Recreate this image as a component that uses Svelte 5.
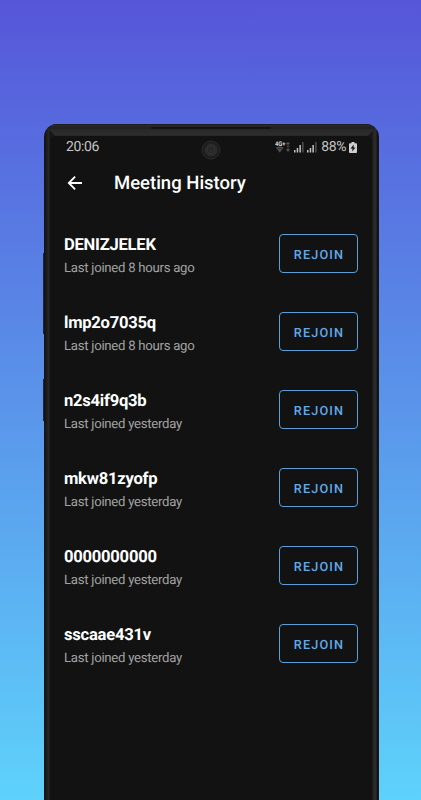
<script>
  const meetings = [
    { name: 'DENIZJELEK', joined: '8 hours ago' },
    { name: 'lmp2o7035q', joined: '8 hours ago' },
    { name: 'n2s4if9q3b', joined: 'yesterday' },
    { name: 'mkw81zyofp', joined: 'yesterday' },
    { name: '0000000000', joined: 'yesterday' },
    { name: 'sscaae431v', joined: 'yesterday' }
  ];
</script>

{#snippet signal()}
  <svg class="signal" width="10" height="12" viewBox="0 0 10 12">
    <path d="M0 9h1.5v2.5H0zM2.7 7h1.5v4.5H2.7zM5.4 4h1.5v7.5H5.4z" fill="#c4c4c4" />
    <path d="M8.1 1h1.5v10.5H8.1z" fill="#505050" />
  </svg>
{/snippet}

<div class="stage">
  <div class="phone">
    <span class="key volume"></span>
    <span class="key power"></span>
    <span class="speaker"></span>
    <div class="screen">
      <svg class="camera" width="20" height="20" viewBox="0 0 20 20">
        <circle cx="10" cy="10" r="9" fill="#1b1b1b" stroke="#2c2c2c" />
        <circle cx="10" cy="10" r="6.8" fill="#2b2b2b" stroke="#202020" />
        <circle cx="10" cy="10" r="3.6" fill="#242424" stroke="#333" />
        <circle cx="10" cy="10.5" r="1.5" fill="#303030" />
      </svg>

      <div class="status">
        <span class="clock">20:06</span>
        <div class="indicators">
          <svg class="network" width="16" height="12" viewBox="0 0 16 12">
            <text x="0" y="5" textLength="10.5" lengthAdjust="spacingAndGlyphs">4G+</text>
            <path d="M.8 6.8Q4.7 4.4 8.6 6.8L4.7 11.4z" fill="#505050" />
            <path d="M2.2 8Q4.7 6.5 7.2 8" fill="none" stroke="#222" stroke-width=".7" />
            <path d="M11.5 3L13 1.2 14.5 3zM13 2v3M11.7 5.5h2.8M13 6v3M11.5 8.5L13 10.5l1.5-2z" fill="#666" stroke="#555" stroke-width=".7" />
          </svg>
          {@render signal()}
          {@render signal()}
          <span class="percent">88%</span>
          <svg class="battery" width="8" height="11" viewBox="0 0 8 11">
            <path d="M2.5 0h3v1.2h1.6q.9 0 .9.9v8q0 .9-.9.9H.9q-.9 0-.9-.9v-8q0-.9.9-.9h1.6z" fill="#cfcfcf" />
            <path d="M4.8 2.5L1.5 6.5h2L3.1 9.4 6.5 5.4h-2z" fill="#121212" />
          </svg>
        </div>
      </div>

      <header>
        <svg class="back" width="16" height="16" viewBox="0 0 16 16">
          <path d="M15 8H1.8M8.1 1.7L1.8 8l6.3 6.3" fill="none" stroke="#fff" stroke-width="1.8" />
        </svg>
        <h1>Meeting History</h1>
      </header>

      <ul>
        {#each meetings as meeting}
          <li>
            <div class="info">
              <div class="name">{meeting.name}</div>
              <div class="joined">Last joined {meeting.joined}</div>
            </div>
            <button>REJOIN</button>
          </li>
        {/each}
      </ul>
    </div>
  </div>
</div>

<style>
  :global(body) {
    margin: 0;
  }
  .stage {
    box-sizing: border-box;
    height: 800px;
    padding: 124px 42px 0 44px;
    overflow: hidden;
    background: linear-gradient(#5656d9, #5ed2fb);
    font-family: Roboto, sans-serif;
    text-rendering: geometricPrecision;
  }
  .phone {
    position: relative;
    box-sizing: border-box;
    height: 720px;
    padding: 12px 7px 0 6px;
    border-radius: 13px 13px 0 0;
    background: linear-gradient(90deg, #111 0, #191919 2px, #272727 5px, #171717 6px, #171717 328px, #2b2b2b 330px, #292929 332px, #0b0b0b 334px, #222 335px);
  }
  .phone::before {
    content: '';
    position: absolute;
    inset: 0 0 auto;
    height: 13px;
    border-radius: 13px 13px 0 0;
    background: linear-gradient(#111 0, #2a2a2a 1px, #202020 4px, #292929 6px, #2d2d2d 11px, #1b1b1b 13px);
    clip-path: polygon(0 0, 100% 0, calc(100% - 12px) 100%, 12px 100%);
  }
  .key {
    position: absolute;
    left: -1px;
    width: 1px;
    background: #202437;
  }
  .volume {
    top: 129px;
    height: 81px;
  }
  .power {
    top: 255px;
    height: 42px;
  }
  .speaker {
    position: absolute;
    top: 3px;
    left: 107px;
    width: 120px;
    height: 2px;
    border-radius: 1px;
    background: #131313;
  }
  .screen {
    position: relative;
    height: 100%;
    border-radius: 6px 6px 0 0;
    background: #121212;
  }
  .camera {
    position: absolute;
    top: 4px;
    left: 151px;
  }
  .status {
    display: flex;
    align-items: center;
    justify-content: space-between;
    height: 22px;
    padding: 0 15px 0 16px;
    color: #c4c4c4;
  }
  .clock,
  .percent {
    font-size: 14px;
    line-height: 16px;
    letter-spacing: -0.4px;
  }
  .indicators {
    display: flex;
    align-items: center;
  }
  .network text {
    font-size: 6.5px;
    font-weight: 700;
    fill: #d8d8d8;
  }
  .signal {
    margin-left: 3px;
  }
  .percent {
    margin: 0 3px 0 4px;
  }
  header {
    display: flex;
    align-items: center;
    height: 50px;
    padding-left: 17px;
  }
  .back {
    margin-top: -1px;
  }
  h1 {
    margin: -1px 0 0 31px;
    color: #fff;
    font-size: 18.5px;
    font-weight: 500;
    line-height: 22px;
  }
  ul {
    margin: 6px 0 0;
    padding: 0;
    list-style: none;
  }
  li {
    display: flex;
    align-items: center;
    justify-content: space-between;
    height: 78px;
    padding: 0 14px;
  }
  .info {
    padding-top: 8px;
  }
  .name {
    color: #fff;
    font-size: 16.6px;
    font-weight: 700;
    line-height: 22px;
    letter-spacing: -0.25px;
  }
  .joined {
    margin-top: 2px;
    color: #a2a2a2;
    font-size: 13.2px;
    line-height: 20px;
    letter-spacing: -0.28px;
  }
  button {
    box-sizing: border-box;
    width: 79px;
    height: 39px;
    padding: 4px 0 0 1px;
    border: 1px solid #5c9fd8;
    border-radius: 4px;
    background: none;
    color: #64a9e6;
    font: 500 12.7px Roboto, sans-serif;
    letter-spacing: 1.15px;
    text-rendering: inherit;
  }
</style>
